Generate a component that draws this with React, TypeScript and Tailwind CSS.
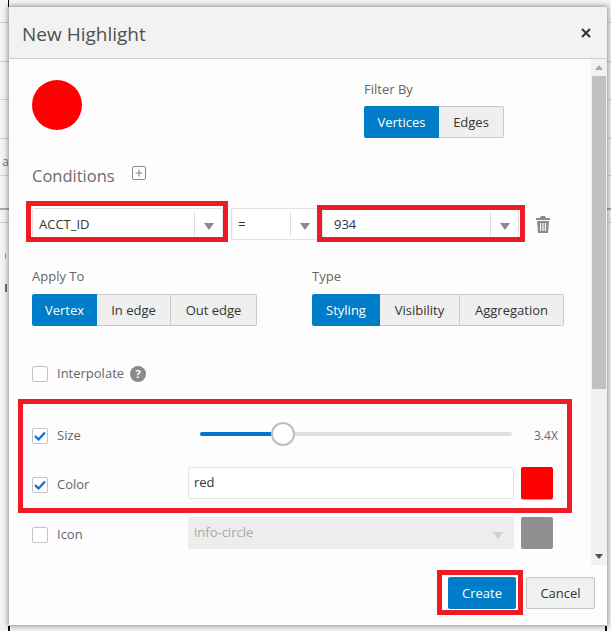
const FONT = { fontFamily: '"Open Sans", "Noto Sans", sans-serif' };

// 背後のページに見えている罫線
const BACKDROP_LINES = [22, 61, 99, 138, 175, 222];

function Arrow({ className = "" }: { className?: string }) {
    return (
        <svg width="12" height="7" viewBox="0 0 12 7" className={className}>
            <path d="M1 0h10L6 7z" fill="currentColor" />
        </svg>
    );
}

function Select({ value, className }: { value: string; className: string }) {
    return (
        <div className={`flex h-[32px] items-center rounded-[2px] border border-[#e3e3e3] bg-white ${className}`}>
            <span className="flex-1 pl-[6px] pt-[2px] text-[13px] text-[#333]">{value}</span>
            <span className="h-[24px] w-px bg-[#dcdcdc]" />
            <span className="flex w-[27px] justify-center text-[#8a8a8a]">
                <Arrow className="mt-[4px]" />
            </span>
        </div>
    );
}

function Segmented({ items, widths }: { items: string[]; widths: string[] }) {
    return (
        <div className="flex h-[32px]">
            {items.map((item, i) => (
                <div
                    key={item}
                    className={
                        i === 0
                            ? `flex items-center justify-center rounded-l-[2px] bg-[#007dc8] pt-[2px] text-[13px] font-medium text-white ${widths[i]}`
                            : `flex items-center justify-center border border-l-0 border-[#c9c9c9] bg-[#efefef] pt-[1px] text-[13px] text-[#333] last:rounded-r-[2px] ${widths[i]}`
                    }
                >
                    {item}
                </div>
            ))}
        </div>
    );
}

function Check({ checked = false }: { checked?: boolean }) {
    return (
        <span className="flex size-[16px] shrink-0 items-center justify-center rounded-[2px] border border-[#c4c4c4] bg-white">
            {checked && (
                <svg width="12" height="10" viewBox="0 0 12 10">
                    <path d="M1 5l3.5 3.5L11 1.5" fill="none" stroke="#0572ce" strokeWidth="2.2" />
                </svg>
            )}
        </span>
    );
}

export default function App() {
    return (
        <div className="relative h-[631px] w-[611px] overflow-hidden bg-[#f3f3f3] pl-[9px] pt-[7px]" style={FONT}>
            {/* 背後のページ */}
            {BACKDROP_LINES.map((y) => (
                <div key={y} className="absolute left-0 h-px w-full bg-[#cfcfcf]" style={{ top: y }} />
            ))}
            <div className="absolute left-0 top-[208px] h-[2px] w-full bg-[#a8a8a8]" />
            <div className="absolute left-[2px] top-[153px] text-[12px] text-[#777]">a</div>
            <div className="absolute left-[5px] top-[253px] h-[6px] w-px bg-[#d9a441]" />
            <div className="absolute left-[5px] top-[284px] h-[8px] w-[2px] bg-[#6a5fb0]" />
            <div className="absolute left-[8px] top-0 h-[7px] w-px bg-black" />
            <div className="absolute bottom-0 left-[8px] h-[5px] w-[2px] bg-black" />
            <div className="absolute bottom-0 right-[4px] h-[5px] w-[2px] bg-black" />

            {/* ダイアログ */}
            <div className="relative flex h-[618px] w-[598px] flex-col bg-[#fdfdfd] shadow-[0_0_5px_1px_rgba(0,0,0,0.42)]">
                <div className="flex h-[52px] shrink-0 items-center justify-between border-b border-[#cfcfcf] bg-[#f2f2f2] pl-[13px] pr-[16px]">
                    <h1 className="pt-[3px] text-[19px] font-normal text-[#4f4f4f]">New Highlight</h1>
                    <svg width="10" height="10" viewBox="0 0 10 10">
                        <path d="M1 1l8 8M9 1l-8 8" stroke="#333" strokeWidth="2" />
                    </svg>
                </div>

                <div className="flex min-h-0 flex-1">
                    <div className="min-w-0 flex-1 pl-[23px] pr-[23px] pt-[21px]">
                        <div className="flex">
                            <div className="size-[50px] rounded-full bg-[#ff0000]" />
                            <div className="ml-[282px] mt-[-1px]">
                                <div className="text-[13px] leading-[20px] text-[#666]">Filter By</div>
                                <div className="mt-[7px]">
                                    <Segmented items={["Vertices", "Edges"]} widths={["w-[75px]", "w-[65px]"]} />
                                </div>
                            </div>
                        </div>

                        <div className="mt-[23px] flex items-center">
                            <span className="pt-[2px] text-[16.5px] leading-[26px] text-[#6b6b6b]">Conditions</span>
                            <svg width="14" height="14" viewBox="0 0 14 14" className="ml-[17px] -translate-y-[2px]">
                                <rect x="0.5" y="0.5" width="13" height="13" rx="1.5" fill="none" stroke="#8a8a8a" />
                                <path d="M7 3.5v7M3.5 7h7" stroke="#8a8a8a" strokeWidth="1.2" />
                            </svg>
                        </div>

                        <div className="mt-[19px] flex items-center">
                            <Select value="ACCT_ID" className="w-[191px]" />
                            <Select value="=" className="ml-[8px] w-[88px]" />
                            <Select value="934" className="ml-[3px] w-[197px] pl-[5px]" />
                            <svg width="14" height="17" viewBox="0 0 14 17" className="ml-[17px] shrink-0">
                                <path d="M5 0h4l1 2h4v2H0V2h4zM1 5h12l-1 12H2zM4 7v8h1.2V7zm2.4 0v8h1.2V7zM8.8 7v8H10V7z" fill="#8a8a8a" fillRule="evenodd" />
                            </svg>
                        </div>

                        <div className="mt-[26px] flex">
                            <div className="w-[280px]">
                                <div className="text-[13px] leading-[20px] text-[#666]">Apply To</div>
                                <div className="mt-[8px]">
                                    <Segmented items={["Vertex", "In edge", "Out edge"]} widths={["w-[65px]", "w-[74px]", "w-[86px]"]} />
                                </div>
                            </div>
                            <div>
                                <div className="text-[13px] leading-[20px] text-[#666]">Type</div>
                                <div className="mt-[8px]">
                                    <Segmented items={["Styling", "Visibility", "Aggregation"]} widths={["w-[68px]", "w-[80px]", "w-[104px]"]} />
                                </div>
                            </div>
                        </div>

                        <div className="mt-[40px] flex h-[16px] items-center">
                            <Check />
                            <span className="ml-[9px] text-[13px] text-[#666]">Interpolate</span>
                            <span className="ml-[6px] flex size-[16px] items-center justify-center rounded-full bg-[#8a8a8a] text-[11px] font-bold text-white">?</span>
                        </div>

                        <div className="mt-[18px] h-px bg-[#e2e2e2]" />

                        <div className="mt-[27px] flex h-[16px] items-center">
                            <Check checked />
                            <span className="ml-[9px] w-[143px] text-[13px] text-[#666]">Size</span>
                            <div className="relative mb-[4px] h-[4px] w-[312px] rounded-full bg-[#e0e0e0]">
                                <div className="h-[4px] w-[84px] rounded-full bg-[#0572ce]" />
                                <div className="absolute left-[71px] top-[-10px] size-[24px] rounded-full border-2 border-[#bdbdbd] bg-white" />
                            </div>
                            <span className="ml-[22px] text-[12px] text-[#666]">3.4X</span>
                        </div>

                        <div className="mt-[23px] flex items-center">
                            <div className="flex items-center pt-[4px]">
                                <Check checked />
                                <span className="ml-[9px] w-[131px] text-[13px] text-[#666]">Color</span>
                            </div>
                            <div className="flex h-[32px] w-[326px] items-center rounded-[2px] border border-[#e3e3e3] bg-white pl-[5px] text-[13px] text-[#333]">red</div>
                            <div className="ml-[7px] size-[32px] rounded-[2px] bg-[#ff0000] shadow-[0_1px_1px_rgba(0,0,0,0.35)]" />
                        </div>

                        <div className="mt-[18px] flex items-center">
                            <div className="flex items-center pt-[4px]">
                                <Check />
                                <span className="ml-[9px] w-[131px] text-[13px] text-[#666]">Icon</span>
                            </div>
                            <div className="flex h-[32px] w-[326px] items-center justify-between rounded-[2px] bg-[#ededed] pl-[6px] pr-[10px] text-[13px] text-[#a8a8a8]">
                                info-circle
                                <span className="text-[#d0d0d0]"><Arrow className="mt-[4px]" /></span>
                            </div>
                            <div className="ml-[7px] size-[32px] rounded-[2px] bg-[#8f8f8f]" />
                        </div>
                    </div>

                    {/* スクロールバー */}
                    <div className="flex w-[16px] shrink-0 flex-col items-center bg-[#f1f1f1] pr-px">
                        <div className="flex h-[17px] items-center text-[#a8a8a8]">
                            <svg width="8" height="5" viewBox="0 0 8 5"><path d="M0 5h8L4 0z" fill="currentColor" /></svg>
                        </div>
                        <div className="h-[313px] w-[14px] bg-[#c1c1c1]" />
                        <div className="flex-1" />
                        <div className="flex h-[17px] items-center text-[#505050]">
                            <svg width="8" height="5" viewBox="0 0 8 5"><path d="M0 0h8L4 5z" fill="currentColor" /></svg>
                        </div>
                    </div>
                </div>

                <div className="flex h-[60px] shrink-0 items-start justify-end gap-[10px] pr-[12px] pt-[12px]">
                    <button className="h-[32px] w-[68px] rounded-[2px] bg-[#007dc8] pt-[1px] text-[13px] font-medium text-white">Create</button>
                    <button className="h-[32px] w-[69px] rounded-[2px] border border-[#c4c4c4] bg-[#f0f0f0] pt-[1px] text-[13px] text-[#333]">Cancel</button>
                </div>

                {/* 赤い注釈枠 */}
                <div className="absolute left-[17px] top-[194px] h-[41px] w-[202px] border-[5px] border-[#ed1c24]" />
                <div className="absolute left-[308px] top-[198px] h-[37px] w-[208px] border-[5px] border-[#ed1c24]" />
                <div className="absolute left-[9px] top-[392px] h-[114px] w-[554px] border-[5px] border-[#ed1c24]" />
                <div className="absolute left-[428px] top-[563px] h-[45px] w-[86px] border-[5px] border-[#ed1c24]" />
            </div>
        </div>
    );
}
